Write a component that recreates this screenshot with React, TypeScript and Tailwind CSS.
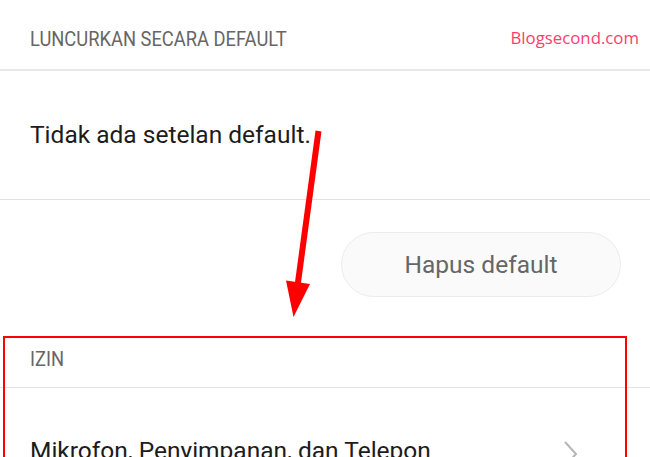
import React from "react";

export default function App() {
  const roboto = { fontFamily: "Roboto, 'Liberation Sans', sans-serif" };
  return (
    <div className="relative w-[650px] h-[457px] overflow-hidden bg-white" style={roboto}>
      {/* Header */}
      <div className="h-[71px] border-b-2 border-[#e8e8e8] pl-[30px] pt-[30px]">
        <div className="text-[19.5px] leading-none text-[#666666] origin-left scale-x-[0.94] whitespace-nowrap">
          LUNCURKAN SECARA DEFAULT
        </div>
      </div>

      {/* No default */}
      <div className="h-[129px] border-b border-[#e2e2e2] pl-[30px] pt-[52px]">
        <div className="text-[24.5px] leading-none text-[#1c1c1c]">Tidak ada setelan default.</div>
      </div>

      {/* Button */}
      <div className="h-[130px] flex justify-end pr-[29px] pt-[32px]">
        <button className="w-[280px] h-[65px] rounded-full border border-[#ececec] bg-[#fafafa] flex items-center justify-center pt-[2px] text-[24.5px] leading-none text-[#666666]">
          Hapus default
        </button>
      </div>

      {/* IZIN */}
      <div className="h-[58px] border-b border-[#e2e2e2] pl-[30px] pt-[20px]">
        <div className="text-[19.5px] leading-none text-[#666666] origin-left scale-x-[0.94]">IZIN</div>
      </div>

      <div className="flex items-start justify-between pl-[30px] pr-[72px] pt-[51px]">
        <div className="text-[24.5px] leading-none text-[#1c1c1c] whitespace-nowrap">
          Mikrofon, Penyimpanan, dan Telepon
        </div>
        <svg width="15" height="28" viewBox="0 0 15 28" className="mt-[1px]">
          <polyline points="2,2 13,14 2,26" fill="none" stroke="#b5b5b5" strokeWidth="2" />
        </svg>
      </div>

      {/* Watermark */}
      <div
        className="absolute top-[30px] right-[11px] text-[16.8px] leading-none text-[#ff3d6e]"
        style={{ fontFamily: "'Open Sans', 'Noto Sans', sans-serif" }}
      >
        Blogsecond.com
      </div>

      {/* Red annotation box */}
      <div className="absolute left-[3px] top-[336px] w-[624px] h-[200px] border-2 border-[#ff0000]" />

      {/* Arrow */}
      <svg className="absolute left-0 top-0" width="650" height="457" viewBox="0 0 650 457">
        <line x1="318.5" y1="131" x2="297.5" y2="286" stroke="#ff0000" strokeWidth="6" />
        <polygon points="286,280.5 310,284 293.5,317" fill="#ff0000" />
      </svg>
    </div>
  );
}
